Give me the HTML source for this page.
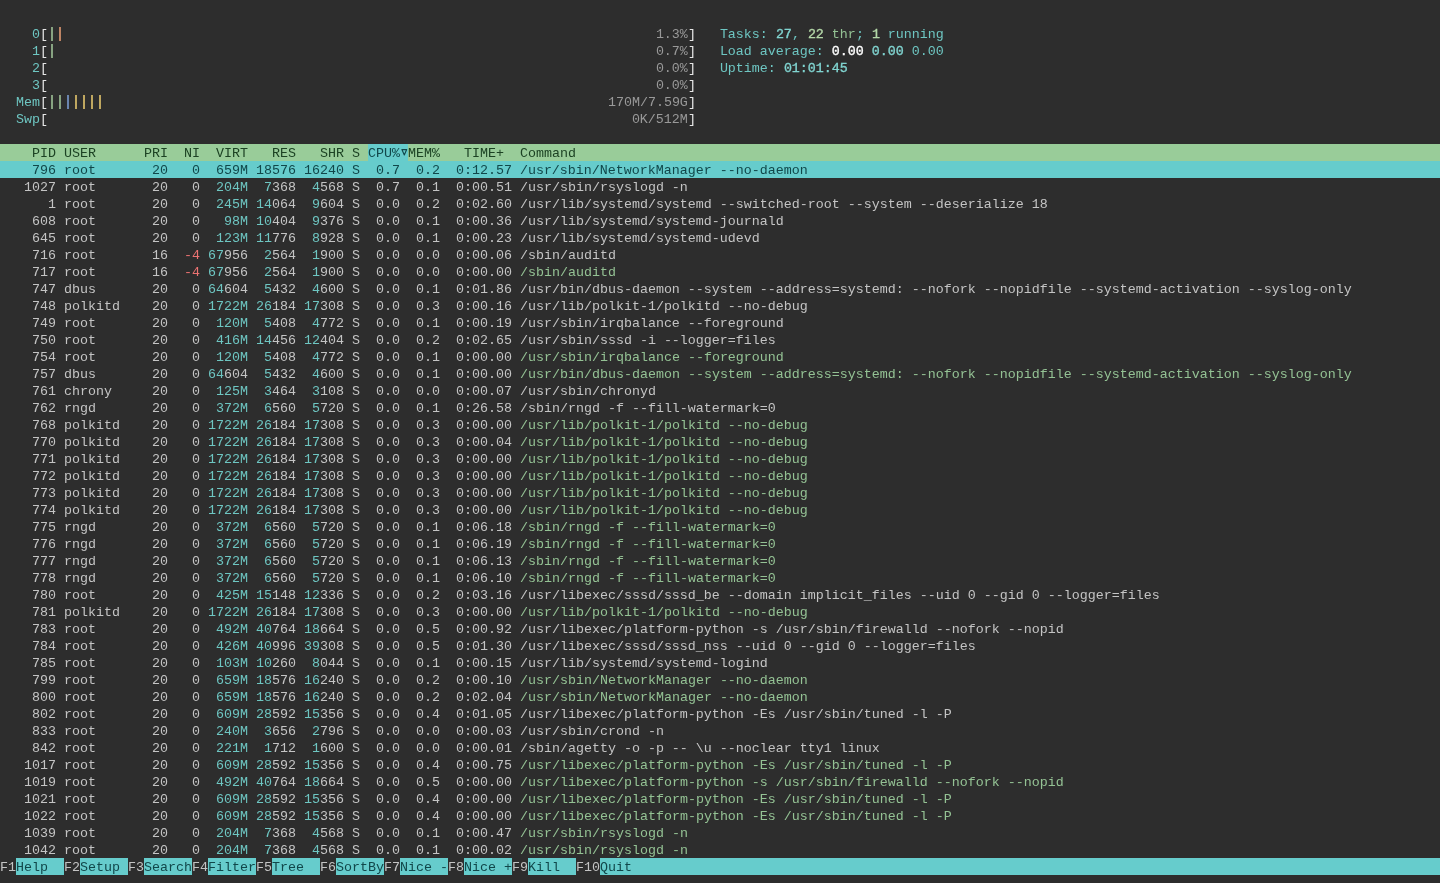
<!DOCTYPE html>
<html><head><meta charset="utf-8"><title>htop</title><style>
html,body{margin:0;padding:0;}
body{width:1440px;height:883px;overflow:hidden;background:#2d2d2d;position:relative;}
#scr{position:absolute;left:0;top:0;width:1440px;height:883px;will-change:transform;}
.row{position:absolute;left:0;width:1440px;height:17px;line-height:19px;white-space:pre;
 font-family:"Liberation Mono",monospace;font-size:13.3311px;color:#c4c4c4;}
.row span{display:inline-block;height:17px;vertical-align:top;}
.hdr{background:#99cc99;}
.sel{background:#66cccc;}
.c{color:#6ec6c2;}
.g{color:#94c294;}
.r{color:#ec7372;}
.y{color:#ffcc66;}
.bl{color:#6699cc;}
.w{color:#e6e6e6;}
.wb{color:#ffffff;-webkit-text-stroke:0.35px currentColor;}
.cb{color:#80d4d0;-webkit-text-stroke:0.35px currentColor;}
.gb{color:#b4d8a8;-webkit-text-stroke:0.35px currentColor;}
.s{color:#999999;}
.k{color:#11474a;}
.hdr .k{color:#1c4223;}
.hdr .hc{color:#11474a;}
.tri{width:8px;}
.bar{position:relative;color:transparent!important;}
.bar:after{content:"";position:absolute;left:3px;top:2px;width:2px;height:14px;opacity:.85;}
.bar.g:after{background:#98b890;}
.bar.r:after{background:#d8946f;}
.bar.bl:after{background:#7594c6;}
.bar.y:after{background:#d9bd6a;}
.hc{background:#66cccc;}
.fl{background:#66cccc;}
.fk{color:#c4c4c4;}
</style></head>
<body><div id="scr">
<div class="row" style="top:25px">    <span class="c">0</span><span class="w">[</span><span class="bar g">|</span><span class="bar r">|</span>                                                                          <span class="s">1.3%</span><span class="w">]</span>   <span class="c">Tasks: </span><span class="cb">27</span><span class="c">, </span><span class="gb">22</span><span class="g"> thr</span><span class="c">; </span><span class="gb">1</span><span class="c"> running</span></div>
<div class="row" style="top:42px">    <span class="c">1</span><span class="w">[</span><span class="bar g">|</span>                                                                           <span class="s">0.7%</span><span class="w">]</span>   <span class="c">Load average: </span><span class="wb">0.00 </span><span class="cb">0.00 </span><span class="c">0.00</span></div>
<div class="row" style="top:59px">    <span class="c">2</span><span class="w">[</span>                                                                            <span class="s">0.0%</span><span class="w">]</span>   <span class="c">Uptime: </span><span class="cb">01:01:45</span></div>
<div class="row" style="top:76px">    <span class="c">3</span><span class="w">[</span>                                                                            <span class="s">0.0%</span><span class="w">]</span></div>
<div class="row" style="top:93px">  <span class="c">Mem</span><span class="w">[</span><span class="bar g">|</span><span class="bar g">|</span><span class="bar bl">|</span><span class="bar y">|</span><span class="bar y">|</span><span class="bar y">|</span><span class="bar y">|</span>                                                               <span class="s">170M/7.59G</span><span class="w">]</span></div>
<div class="row" style="top:110px">  <span class="c">Swp</span><span class="w">[</span>                                                                         <span class="s">0K/512M</span><span class="w">]</span></div>
<div class="row hdr" style="top:144px"><span class="k">    PID USER      PRI  NI  VIRT   RES   SHR S </span><span class="k hc">CPU%</span><span class="k hc tri"><svg width="8" height="17" viewBox="0 0 8 17" style="display:block"><path d="M1.9 5.6 H6.7 L4.3 10.9 Z" fill="none" stroke="#11474a" stroke-width="1.1" stroke-linejoin="round"/></svg></span><span class="k">MEM%   TIME+  Command                                                                                                            </span></div>
<div class="row sel" style="top:161px"><span class="k">    796 root       20   0  659M 18576 16240 S  0.7  0.2  0:12.57 /usr/sbin/NetworkManager --no-daemon                                                                               </span></div>
<div class="row" style="top:178px">   1027 root       20   0 <span class="c"> 204M </span><span class="c"> 7</span>368 <span class="c"> 4</span>568 S  0.7  0.1  0:00.51 /usr/sbin/rsyslogd -n</div>
<div class="row" style="top:195px">      1 root       20   0 <span class="c"> 245M </span><span class="c">14</span>064 <span class="c"> 9</span>604 S  0.0  0.2  0:02.60 /usr/lib/systemd/systemd --switched-root --system --deserialize 18</div>
<div class="row" style="top:212px">    608 root       20   0 <span class="c">  98M </span><span class="c">10</span>404 <span class="c"> 9</span>376 S  0.0  0.1  0:00.36 /usr/lib/systemd/systemd-journald</div>
<div class="row" style="top:229px">    645 root       20   0 <span class="c"> 123M </span><span class="c">11</span>776 <span class="c"> 8</span>928 S  0.0  0.1  0:00.23 /usr/lib/systemd/systemd-udevd</div>
<div class="row" style="top:246px">    716 root       16 <span class="r"> -4 </span><span class="c">67</span>956 <span class="c"> 2</span>564 <span class="c"> 1</span>900 S  0.0  0.0  0:00.06 /sbin/auditd</div>
<div class="row" style="top:263px">    717 root       16 <span class="r"> -4 </span><span class="c">67</span>956 <span class="c"> 2</span>564 <span class="c"> 1</span>900 S  0.0  0.0  0:00.00 <span class="g">/sbin/auditd</span></div>
<div class="row" style="top:280px">    747 dbus       20   0 <span class="c">64</span>604 <span class="c"> 5</span>432 <span class="c"> 4</span>600 S  0.0  0.1  0:01.86 /usr/bin/dbus-daemon --system --address=systemd: --nofork --nopidfile --systemd-activation --syslog-only</div>
<div class="row" style="top:297px">    748 polkitd    20   0 <span class="c">1722M </span><span class="c">26</span>184 <span class="c">17</span>308 S  0.0  0.3  0:00.16 /usr/lib/polkit-1/polkitd --no-debug</div>
<div class="row" style="top:314px">    749 root       20   0 <span class="c"> 120M </span><span class="c"> 5</span>408 <span class="c"> 4</span>772 S  0.0  0.1  0:00.19 /usr/sbin/irqbalance --foreground</div>
<div class="row" style="top:331px">    750 root       20   0 <span class="c"> 416M </span><span class="c">14</span>456 <span class="c">12</span>404 S  0.0  0.2  0:02.65 /usr/sbin/sssd -i --logger=files</div>
<div class="row" style="top:348px">    754 root       20   0 <span class="c"> 120M </span><span class="c"> 5</span>408 <span class="c"> 4</span>772 S  0.0  0.1  0:00.00 <span class="g">/usr/sbin/irqbalance --foreground</span></div>
<div class="row" style="top:365px">    757 dbus       20   0 <span class="c">64</span>604 <span class="c"> 5</span>432 <span class="c"> 4</span>600 S  0.0  0.1  0:00.00 <span class="g">/usr/bin/dbus-daemon --system --address=systemd: --nofork --nopidfile --systemd-activation --syslog-only</span></div>
<div class="row" style="top:382px">    761 chrony     20   0 <span class="c"> 125M </span><span class="c"> 3</span>464 <span class="c"> 3</span>108 S  0.0  0.0  0:00.07 /usr/sbin/chronyd</div>
<div class="row" style="top:399px">    762 rngd       20   0 <span class="c"> 372M </span><span class="c"> 6</span>560 <span class="c"> 5</span>720 S  0.0  0.1  0:26.58 /sbin/rngd -f --fill-watermark=0</div>
<div class="row" style="top:416px">    768 polkitd    20   0 <span class="c">1722M </span><span class="c">26</span>184 <span class="c">17</span>308 S  0.0  0.3  0:00.00 <span class="g">/usr/lib/polkit-1/polkitd --no-debug</span></div>
<div class="row" style="top:433px">    770 polkitd    20   0 <span class="c">1722M </span><span class="c">26</span>184 <span class="c">17</span>308 S  0.0  0.3  0:00.04 <span class="g">/usr/lib/polkit-1/polkitd --no-debug</span></div>
<div class="row" style="top:450px">    771 polkitd    20   0 <span class="c">1722M </span><span class="c">26</span>184 <span class="c">17</span>308 S  0.0  0.3  0:00.00 <span class="g">/usr/lib/polkit-1/polkitd --no-debug</span></div>
<div class="row" style="top:467px">    772 polkitd    20   0 <span class="c">1722M </span><span class="c">26</span>184 <span class="c">17</span>308 S  0.0  0.3  0:00.00 <span class="g">/usr/lib/polkit-1/polkitd --no-debug</span></div>
<div class="row" style="top:484px">    773 polkitd    20   0 <span class="c">1722M </span><span class="c">26</span>184 <span class="c">17</span>308 S  0.0  0.3  0:00.00 <span class="g">/usr/lib/polkit-1/polkitd --no-debug</span></div>
<div class="row" style="top:501px">    774 polkitd    20   0 <span class="c">1722M </span><span class="c">26</span>184 <span class="c">17</span>308 S  0.0  0.3  0:00.00 <span class="g">/usr/lib/polkit-1/polkitd --no-debug</span></div>
<div class="row" style="top:518px">    775 rngd       20   0 <span class="c"> 372M </span><span class="c"> 6</span>560 <span class="c"> 5</span>720 S  0.0  0.1  0:06.18 <span class="g">/sbin/rngd -f --fill-watermark=0</span></div>
<div class="row" style="top:535px">    776 rngd       20   0 <span class="c"> 372M </span><span class="c"> 6</span>560 <span class="c"> 5</span>720 S  0.0  0.1  0:06.19 <span class="g">/sbin/rngd -f --fill-watermark=0</span></div>
<div class="row" style="top:552px">    777 rngd       20   0 <span class="c"> 372M </span><span class="c"> 6</span>560 <span class="c"> 5</span>720 S  0.0  0.1  0:06.13 <span class="g">/sbin/rngd -f --fill-watermark=0</span></div>
<div class="row" style="top:569px">    778 rngd       20   0 <span class="c"> 372M </span><span class="c"> 6</span>560 <span class="c"> 5</span>720 S  0.0  0.1  0:06.10 <span class="g">/sbin/rngd -f --fill-watermark=0</span></div>
<div class="row" style="top:586px">    780 root       20   0 <span class="c"> 425M </span><span class="c">15</span>148 <span class="c">12</span>336 S  0.0  0.2  0:03.16 /usr/libexec/sssd/sssd_be --domain implicit_files --uid 0 --gid 0 --logger=files</div>
<div class="row" style="top:603px">    781 polkitd    20   0 <span class="c">1722M </span><span class="c">26</span>184 <span class="c">17</span>308 S  0.0  0.3  0:00.00 <span class="g">/usr/lib/polkit-1/polkitd --no-debug</span></div>
<div class="row" style="top:620px">    783 root       20   0 <span class="c"> 492M </span><span class="c">40</span>764 <span class="c">18</span>664 S  0.0  0.5  0:00.92 /usr/libexec/platform-python -s /usr/sbin/firewalld --nofork --nopid</div>
<div class="row" style="top:637px">    784 root       20   0 <span class="c"> 426M </span><span class="c">40</span>996 <span class="c">39</span>308 S  0.0  0.5  0:01.30 /usr/libexec/sssd/sssd_nss --uid 0 --gid 0 --logger=files</div>
<div class="row" style="top:654px">    785 root       20   0 <span class="c"> 103M </span><span class="c">10</span>260 <span class="c"> 8</span>044 S  0.0  0.1  0:00.15 /usr/lib/systemd/systemd-logind</div>
<div class="row" style="top:671px">    799 root       20   0 <span class="c"> 659M </span><span class="c">18</span>576 <span class="c">16</span>240 S  0.0  0.2  0:00.10 <span class="g">/usr/sbin/NetworkManager --no-daemon</span></div>
<div class="row" style="top:688px">    800 root       20   0 <span class="c"> 659M </span><span class="c">18</span>576 <span class="c">16</span>240 S  0.0  0.2  0:02.04 <span class="g">/usr/sbin/NetworkManager --no-daemon</span></div>
<div class="row" style="top:705px">    802 root       20   0 <span class="c"> 609M </span><span class="c">28</span>592 <span class="c">15</span>356 S  0.0  0.4  0:01.05 /usr/libexec/platform-python -Es /usr/sbin/tuned -l -P</div>
<div class="row" style="top:722px">    833 root       20   0 <span class="c"> 240M </span><span class="c"> 3</span>656 <span class="c"> 2</span>796 S  0.0  0.0  0:00.03 /usr/sbin/crond -n</div>
<div class="row" style="top:739px">    842 root       20   0 <span class="c"> 221M </span><span class="c"> 1</span>712 <span class="c"> 1</span>600 S  0.0  0.0  0:00.01 /sbin/agetty -o -p -- \u --noclear tty1 linux</div>
<div class="row" style="top:756px">   1017 root       20   0 <span class="c"> 609M </span><span class="c">28</span>592 <span class="c">15</span>356 S  0.0  0.4  0:00.75 <span class="g">/usr/libexec/platform-python -Es /usr/sbin/tuned -l -P</span></div>
<div class="row" style="top:773px">   1019 root       20   0 <span class="c"> 492M </span><span class="c">40</span>764 <span class="c">18</span>664 S  0.0  0.5  0:00.00 <span class="g">/usr/libexec/platform-python -s /usr/sbin/firewalld --nofork --nopid</span></div>
<div class="row" style="top:790px">   1021 root       20   0 <span class="c"> 609M </span><span class="c">28</span>592 <span class="c">15</span>356 S  0.0  0.4  0:00.00 <span class="g">/usr/libexec/platform-python -Es /usr/sbin/tuned -l -P</span></div>
<div class="row" style="top:807px">   1022 root       20   0 <span class="c"> 609M </span><span class="c">28</span>592 <span class="c">15</span>356 S  0.0  0.4  0:00.00 <span class="g">/usr/libexec/platform-python -Es /usr/sbin/tuned -l -P</span></div>
<div class="row" style="top:824px">   1039 root       20   0 <span class="c"> 204M </span><span class="c"> 7</span>368 <span class="c"> 4</span>568 S  0.0  0.1  0:00.47 <span class="g">/usr/sbin/rsyslogd -n</span></div>
<div class="row" style="top:841px">   1042 root       20   0 <span class="c"> 204M </span><span class="c"> 7</span>368 <span class="c"> 4</span>568 S  0.0  0.1  0:00.02 <span class="g">/usr/sbin/rsyslogd -n</span></div>
<div class="row" style="top:858px"><span class="fk">F1</span><span class="k fl">Help  </span><span class="fk">F2</span><span class="k fl">Setup </span><span class="fk">F3</span><span class="k fl">Search</span><span class="fk">F4</span><span class="k fl">Filter</span><span class="fk">F5</span><span class="k fl">Tree  </span><span class="fk">F6</span><span class="k fl">SortBy</span><span class="fk">F7</span><span class="k fl">Nice -</span><span class="fk">F8</span><span class="k fl">Nice +</span><span class="fk">F9</span><span class="k fl">Kill  </span><span class="fk">F10</span><span class="k fl">Quit                                                                                                     </span></div>
</div></body></html>
